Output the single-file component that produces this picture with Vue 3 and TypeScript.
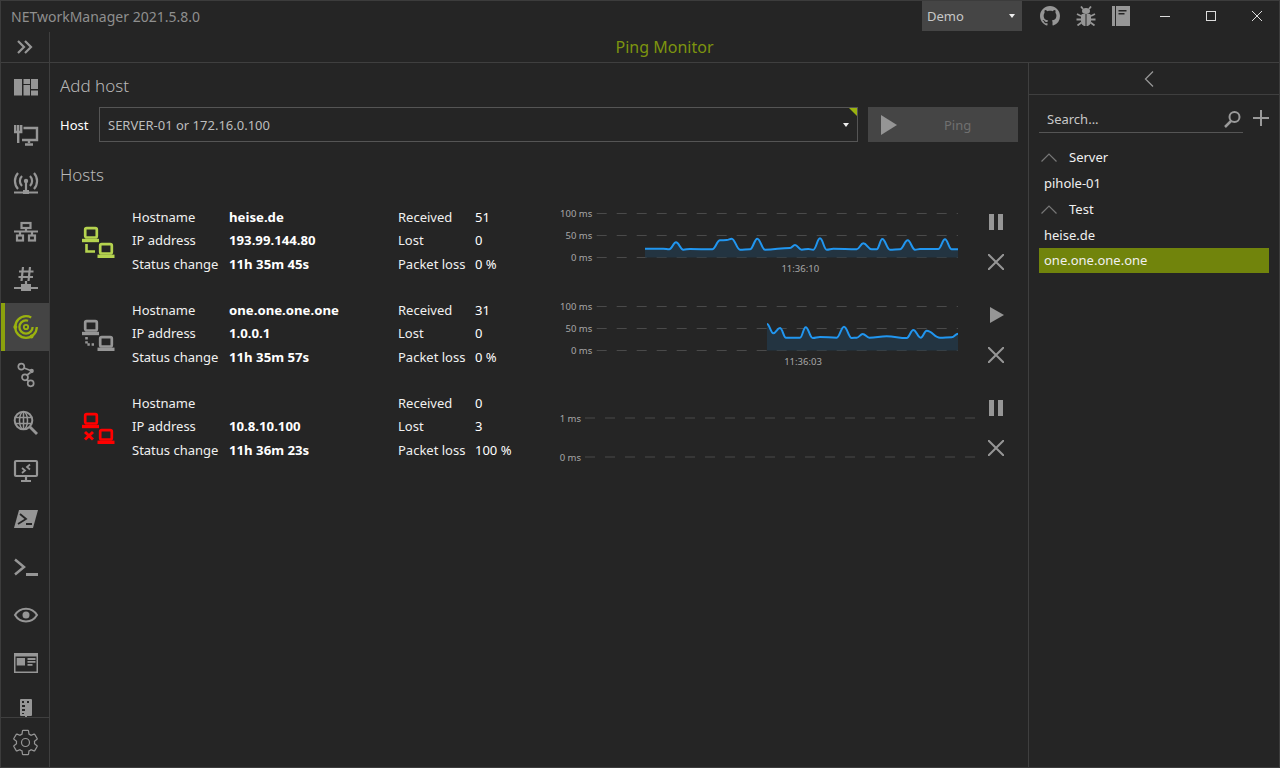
<script setup lang="ts">
interface Chart {
  grid: { label: string; y: number }[]
  startX: number
  endX: number
  labelX: number
  points: number[][]
  time?: string
  timeX?: number
}

interface Host {
  status: 'up' | 'paused' | 'down'
  hostname: string
  ip: string
  change: string
  received: string
  lost: string
  loss: string
  running: boolean
  chart: Chart
}

const grid3 = [
  { label: '100 ms', y: 13.5 },
  { label: '50 ms', y: 35.5 },
  { label: '0 ms', y: 57.5 },
]

// chart coordinates are taken at 3x, so they get divided when drawn
const hosts: Host[] = [
  {
    status: 'up',
    hostname: 'heise.de',
    ip: '193.99.144.80',
    change: '11h 35m 45s',
    received: '51',
    lost: '0',
    loss: '0 %',
    running: true,
    chart: {
      grid: grid3,
      startX: 46.7,
      endX: 408,
      labelX: 42.3,
      time: '11:36:10',
      timeX: 250.3,
      points: [[285,146],[340,146],[358,148],[378,127],[400,149],[420,147],[487,148],[510,121],[530,120],[545,116],[570,149],[600,148],[622,116],[645,149],[720,144],[735,135],[755,149],[775,147],[790,149],[810,115],[830,149],[850,146],[920,148],[940,130],[965,148],[980,148],[997,117],[1020,149],[1050,148],[1073,121],[1095,149],[1110,147],[1165,147],[1185,118],[1205,148],[1224,148]],
    },
  },
  {
    status: 'paused',
    hostname: 'one.one.one.one',
    ip: '1.0.0.1',
    change: '11h 35m 57s',
    received: '31',
    lost: '0',
    loss: '0 %',
    running: false,
    chart: {
      grid: grid3,
      startX: 46.7,
      endX: 408,
      labelX: 42.3,
      time: '11:36:03',
      timeX: 253,
      points: [[651,93],[670,121],[690,105],[708,134],[750,134],[767,103],[788,135],[810,132],[860,134],[882,101],[905,135],[920,134],[938,123],[958,134],[1010,130],[1070,135],[1090,111],[1112,134],[1130,113],[1170,134],[1205,133],[1224,122]],
    },
  },
  {
    status: 'down',
    hostname: '',
    ip: '10.8.10.100',
    change: '11h 36m 23s',
    received: '0',
    lost: '3',
    loss: '100 %',
    running: true,
    chart: {
      grid: [
        { label: '1 ms', y: 32 },
        { label: '0 ms', y: 71 },
      ],
      startX: 35,
      endX: 425,
      labelX: 31,
      points: [],
    },
  },
]

// flat tangents at each point, gives the rounded peaks of the ping graph
function curve(points: number[][]): string {
  let d = ''
  for (let i = 1; i < points.length; i++) {
    const [x0, y0] = points[i - 1]
    const [x1, y1] = points[i]
    const bend = (x1 - x0) * 0.4
    d += `C${((x0 + bend) / 3).toFixed(1)} ${(y0 / 3).toFixed(1)} ${((x1 - bend) / 3).toFixed(1)} ${(y1 / 3).toFixed(1)} ${(x1 / 3).toFixed(1)} ${(y1 / 3).toFixed(1)}`
  }
  return d
}

function linePath(points: number[][]): string {
  return `M${points[0][0] / 3} ${points[0][1] / 3}${curve(points)}`
}

function areaPath(points: number[][]): string {
  const first = points[0][0] / 3
  const last = points[points.length - 1][0] / 3
  return `M${first} 57.5L${first} ${points[0][1] / 3}${curve(points)}L${last} 57.5Z`
}

const groups = [
  { name: 'Server', items: ['pihole-01'] },
  { name: 'Test', items: ['heise.de', 'one.one.one.one'] },
]
</script>

<template>
  <div class="window">
    <header class="titlebar">
      <span class="app-title">NETworkManager 2021.5.8.0</span>
      <div class="profile">
        <span>Demo</span>
        <i class="caret"></i>
      </div>
      <div class="links">
        <svg width="20" height="20" viewBox="0 0 16 16" fill="currentColor">
          <path d="M8 0C3.58 0 0 3.58 0 8c0 3.54 2.29 6.53 5.47 7.59.4.07.55-.17.55-.38 0-.19-.01-.82-.01-1.49-2.01.37-2.53-.49-2.69-.94-.09-.23-.48-.94-.82-1.13-.28-.15-.68-.52-.01-.53.63-.01 1.08.58 1.23.82.72 1.21 1.87.87 2.33.66.07-.52.28-.87.51-1.07-1.78-.2-3.64-.89-3.64-3.95 0-.87.31-1.59.82-2.15-.08-.2-.36-1.02.08-2.12 0 0 .67-.21 2.2.82.64-.18 1.32-.27 2-.27.68 0 1.36.09 2 .27 1.53-1.04 2.2-.82 2.2-.82.44 1.1.16 1.92.08 2.12.51.56.82 1.27.82 2.15 0 3.07-1.87 3.75-3.65 3.95.29.25.54.73.54 1.48 0 1.07-.01 1.93-.01 2.2 0 .21.15.46.55.38A8.013 8.013 0 0016 8c0-4.42-3.58-8-8-8z" />
        </svg>
        <svg width="20" height="20" viewBox="0 0 20 20" fill="currentColor">
          <path d="M7 3L5 .5M13 3l2-2.500M5 10L1 8M5 13.500H.5M5.500 16.500L1.500 19.500M15 10l4-2M15 13.500h4.500M14.500 16.500l4 3" fill="none" stroke="currentColor" stroke-width="1.800" />
          <ellipse cx="10" cy="5" rx="4" ry="3" />
          <path d="M5 9.500C5 8.500 6 8 7 8h2.500v12C7 20 5 18 5 15zM15 9.500C15 8.500 14 8 13 8h-2.500v12c2.500 0 4.500-2 4.500-5z" />
        </svg>
        <svg width="18" height="20" viewBox="0 0 18 20" fill="currentColor">
          <path d="M0 0h3v20H0zM4 0h14v20H4z" />
          <path d="M6.500 4h8v1.500h-8zM6.500 7h6v1.500h-6z" fill="#252525" />
        </svg>
      </div>
      <div class="window-buttons">
        <span>
          <svg width="12" height="12" viewBox="0 0 12 12" stroke="currentColor" fill="none"><path d="M1 6.500h10" /></svg>
        </span>
        <span>
          <svg width="12" height="12" viewBox="0 0 12 12" stroke="currentColor" fill="none"><rect x="1.500" y="1.500" width="9" height="9" /></svg>
        </span>
        <span>
          <svg width="12" height="12" viewBox="0 0 12 12" stroke="currentColor" fill="none"><path d="M1 1l10 10M11 1L1 11" /></svg>
        </span>
      </div>
    </header>

    <div class="body">
      <aside class="sidebar">
        <div class="collapse">
          <svg width="18" height="14" viewBox="0 0 18 14" fill="none" stroke="currentColor" stroke-width="2.200">
            <path d="M2 1l6 6-6 6M9 1l6 6-6 6" />
          </svg>
        </div>
        <nav class="nav">
          <div class="nav-item">
            <svg class="icon" viewBox="0 0 24 24" fill="currentColor">
              <path d="M0 4h8v16.500H0zM9.500 4H16v5H9.500zM9.500 10H16v10.500H9.500zM17 4h7v10h-7zM17 15.500h7v5h-7z" />
            </svg>
          </div>
          <div class="nav-item">
            <svg class="icon" viewBox="0 0 24 24" fill="none" stroke="currentColor" stroke-width="2.400">
              <path d="M1.200 2v7h6V2M4.200 2v18M9.500 5H23v12H8M15 17v3M11 21.500h8" />
            </svg>
          </div>
          <div class="nav-item">
            <svg class="icon" viewBox="0 0 24 24" fill="none" stroke="currentColor" stroke-width="2.200">
              <path d="M8 5a7 7 0 0 0 0 10M16 5a7 7 0 0 1 0 10M4 2a12 12 0 0 0 0 16M20 2a12 12 0 0 1 0 16M12 12v8M0 21.500h24" />
              <circle cx="12" cy="10" r="2.200" fill="currentColor" stroke="none" />
              <rect x="9" y="19" width="6" height="4" fill="currentColor" stroke="none" />
            </svg>
          </div>
          <div class="nav-item">
            <svg class="icon" viewBox="0 0 24 24" fill="none" stroke="currentColor" stroke-width="2.200">
              <path d="M0 12.500h24M12 9v3M6 12v4M18 12v4" />
              <rect x="7.500" y="4" width="9" height="5" />
              <rect x="3" y="16.500" width="6" height="5" />
              <rect x="15" y="16.500" width="6" height="5" />
            </svg>
          </div>
          <div class="nav-item">
            <svg class="icon" viewBox="0 0 24 24" fill="none" stroke="currentColor" stroke-width="2.200">
              <path d="M9 0L7.500 14M16 0l-1.500 14M5 4.500h14.500M4.500 10H19M12 14v4M0 21h24" />
              <rect x="7" y="17" width="10" height="7" fill="currentColor" stroke="none" />
            </svg>
          </div>
          <div class="nav-item active">
            <svg class="icon" viewBox="0 0 24 24" fill="none" stroke="currentColor" stroke-width="2.300">
              <circle cx="12" cy="12" r="10.800" stroke-dasharray="56 12" />
              <circle cx="12" cy="12" r="6.600" stroke-dasharray="33 9" />
              <circle cx="12" cy="12" r="2.200" stroke-width="1.800" />
              <circle cx="1.300" cy="12" r="2" fill="currentColor" stroke="none" />
              <circle cx="17.500" cy="21.500" r="2" fill="currentColor" stroke="none" />
            </svg>
          </div>
          <div class="nav-item">
            <svg class="icon" viewBox="0 0 24 24" fill="none" stroke="currentColor" stroke-width="1.700">
              <path d="M10 5l6.500 2.500M16.500 9.500l-4 3M12.500 16.500l2.500 2" />
              <circle cx="7.300" cy="3.700" r="3" />
              <circle cx="11" cy="14.300" r="3" />
              <circle cx="16.700" cy="20.300" r="3" />
              <circle cx="17.700" cy="8" r="1.300" fill="currentColor" />
            </svg>
          </div>
          <div class="nav-item">
            <svg class="icon" viewBox="0 0 24 24" fill="none" stroke="currentColor" stroke-width="1.500">
              <circle cx="9.500" cy="9.500" r="8.800" stroke-width="2" />
              <ellipse cx="9.500" cy="9.500" rx="4" ry="8.800" />
              <path d="M9.500 1v17M1 6.500h17M1 12.500h17" />
              <path d="M16 16l7 7" stroke-width="2.800" />
            </svg>
          </div>
          <div class="nav-item">
            <svg class="icon" viewBox="0 0 24 24" fill="none" stroke="currentColor" stroke-width="2.200">
              <rect x="1" y="2" width="22" height="15" rx="1" />
              <path d="M12 17v4M7 22h10" />
              <path d="M8 9l3 2.500-3 2.500M16 5.500l-3 2.500 3 2.500" stroke-width="1.800" />
            </svg>
          </div>
          <div class="nav-item">
            <svg class="icon" viewBox="0 0 24 24" fill="currentColor">
              <path d="M5 3h19l-5 18H0z" />
              <path d="M6 7l6 5-8 5M12 17h6" fill="none" stroke="#252525" stroke-width="1.800" />
            </svg>
          </div>
          <div class="nav-item">
            <svg class="icon" viewBox="0 0 24 24" fill="none" stroke="currentColor" stroke-width="2.500">
              <path d="M1 4.500L10 12l-9 7.500" />
              <path d="M12 19.500h12" stroke-width="3" />
            </svg>
          </div>
          <div class="nav-item">
            <svg class="icon" viewBox="0 0 24 24" fill="none" stroke="currentColor" stroke-width="2">
              <path d="M1 12c5-8.500 17-8.500 22 0-5 8.500-17 8.500-22 0z" />
              <circle cx="12" cy="12" r="3.500" fill="currentColor" stroke="none" />
            </svg>
          </div>
          <div class="nav-item">
            <svg class="icon" viewBox="0 0 24 24" fill="currentColor">
              <path d="M0 2h24v20H0zM1.500 5.500V20.500h21V5.500z" fill-rule="evenodd" />
              <rect x="2.700" y="7" width="8.300" height="7.500" />
              <path d="M13.500 7h8v2h-8zM13.500 10h8v1.700h-8zM13.500 13h5v1.700h-5z" />
            </svg>
          </div>
          <div class="nav-item">
            <svg class="icon" viewBox="0 0 24 24" fill="currentColor">
              <rect x="6" y="0" width="12" height="17" rx="1" />
              <rect x="11" y="17" width="2" height="3" />
              <path d="M8 2h2v2H8zM13 2h2v2h-2zM8 6h3v2H8zM8 10h3v2H8zM8 14h2v1H8z" fill="#252525" />
            </svg>
          </div>
        </nav>
        <div class="settings">
          <svg width="29" height="29" viewBox="0 0 24 24" fill="none" stroke="currentColor">
            <path d="M10 22C9.750 22 9.540 21.820 9.500 21.580L9.130 18.930C8.500 18.680 7.960 18.340 7.440 17.940L4.950 18.950C4.730 19.030 4.460 18.950 4.340 18.730L2.340 15.270C2.210 15.050 2.270 14.780 2.460 14.630L4.570 12.970L4.500 12L4.570 11L2.460 9.370C2.270 9.220 2.210 8.950 2.340 8.730L4.340 5.270C4.460 5.050 4.730 4.960 4.950 5.050L7.440 6.050C7.960 5.660 8.500 5.320 9.130 5.070L9.500 2.420C9.540 2.180 9.750 2 10 2H14C14.250 2 14.460 2.180 14.500 2.420L14.870 5.070C15.500 5.320 16.040 5.660 16.560 6.050L19.050 5.050C19.270 4.960 19.540 5.050 19.660 5.270L21.660 8.730C21.790 8.950 21.730 9.220 21.540 9.370L19.430 11L19.500 12L19.430 13L21.540 14.630C21.730 14.780 21.790 15.050 21.660 15.270L19.660 18.730C19.540 18.950 19.270 19.040 19.050 18.950L16.560 17.950C16.040 18.340 15.500 18.680 14.870 18.930L14.500 21.580C14.460 21.820 14.250 22 14 22H10Z" />
            <circle cx="12" cy="12" r="3.300" />
          </svg>
        </div>
      </aside>

      <div class="content">
        <div class="page-title">Ping Monitor</div>
        <div class="panes">
          <main class="main">
            <h2 class="heading">Add host</h2>
            <div class="add-row">
              <label class="host-label">Host</label>
              <div class="host-input">
                <span>SERVER-01 or 172.16.0.100</span>
                <i class="caret"></i>
                <i class="corner"></i>
              </div>
              <div class="ping-button">
                <svg width="16" height="20" viewBox="0 0 16 20" fill="currentColor"><path d="M0 0l16 10L0 20z" /></svg>
                <span>Ping</span>
              </div>
            </div>

            <h2 class="heading hosts-heading">Hosts</h2>
            <div v-for="host in hosts" :key="host.ip" class="host-row">
              <div class="host-icon" :class="host.status">
                <svg width="34" height="34" viewBox="0 0 34 34" fill="none" stroke="currentColor">
                  <rect x="3.200" y="2.200" width="11.600" height="9.300" rx="1.500" stroke-width="2.700" />
                  <path d="M0 14.500h17" stroke-width="3.400" />
                  <rect x="18.200" y="18.200" width="11.600" height="9.300" rx="1.500" stroke-width="2.700" />
                  <path d="M15.500 30.300H32.500" stroke-width="3.400" />
                  <path v-if="host.status === 'up'" d="M4.500 18v7.500h8.500" stroke-width="2.600" />
                  <path v-else-if="host.status === 'paused'" d="M4.500 18v7.500h9" stroke-width="2.600" stroke-dasharray="2.400 1.800" />
                  <path v-else d="M3 20l8 7.500M11 20l-8 7.500" stroke-width="3" />
                </svg>
              </div>
              <dl class="info labels-wide">
                <dt>Hostname</dt><dd>{{ host.hostname }}</dd>
                <dt>IP address</dt><dd>{{ host.ip }}</dd>
                <dt>Status change</dt><dd>{{ host.change }}</dd>
              </dl>
              <dl class="info labels-narrow">
                <dt>Received</dt><dd>{{ host.received }}</dd>
                <dt>Lost</dt><dd>{{ host.lost }}</dd>
                <dt>Packet loss</dt><dd>{{ host.loss }}</dd>
              </dl>
              <svg class="chart" width="430" height="90" viewBox="0 0 430 90">
                <template v-for="line in host.chart.grid" :key="line.label">
                  <text :x="host.chart.labelX" :y="line.y + 3.500" text-anchor="end" class="chart-text">{{ line.label }}</text>
                  <line :x1="host.chart.startX" :x2="host.chart.endX" :y1="line.y" :y2="line.y" stroke="#4a4a4a" stroke-dasharray="10 10" />
                </template>
                <template v-if="host.chart.points.length">
                  <path :d="areaPath(host.chart.points)" fill="#233441" />
                  <path :d="linePath(host.chart.points)" fill="none" stroke="#2196f0" stroke-width="2" />
                  <text :x="host.chart.timeX" y="72" text-anchor="middle" class="chart-text">{{ host.chart.time }}</text>
                </template>
              </svg>
              <div class="controls">
                <svg v-if="host.running" width="16" height="16" viewBox="0 0 16 16" fill="currentColor">
                  <path d="M1 0h5v16H1zM10 0h5v16h-5z" />
                </svg>
                <svg v-else width="16" height="16" viewBox="0 0 16 16" fill="currentColor">
                  <path d="M2 0l14 8-14 8z" />
                </svg>
                <svg width="16" height="16" viewBox="0 0 16 16" fill="none" stroke="currentColor" stroke-width="2">
                  <path d="M0 0l16 16M16 0L0 16" />
                </svg>
              </div>
            </div>
          </main>

          <aside class="profiles">
            <div class="profiles-collapse">
              <svg width="10" height="16" viewBox="0 0 10 16" fill="none" stroke="currentColor" stroke-width="1.300">
                <path d="M9 .5L1.500 8 9 15.500" />
              </svg>
            </div>
            <div class="search-row">
              <div class="search">
                <span>Search...</span>
                <svg width="17" height="17" viewBox="0 0 17 17" fill="none" stroke="#9a9a9a" stroke-width="2">
                  <circle cx="10.500" cy="6" r="5" />
                  <path d="M7 10l-6 6" stroke-width="2.500" />
                </svg>
              </div>
              <svg class="add" width="16" height="16" viewBox="0 0 16 16" fill="none" stroke="#9a9a9a" stroke-width="2">
                <path d="M8 0v16M0 8h16" />
              </svg>
            </div>
            <div class="tree">
              <template v-for="group in groups" :key="group.name">
                <div class="group">
                  <svg width="16" height="9" viewBox="0 0 16 9" fill="none" stroke="#777" stroke-width="1.200">
                    <path d="M.5 8.500L8 1l7.500 7.500" />
                  </svg>
                  <span>{{ group.name }}</span>
                </div>
                <div
                  v-for="item in group.items"
                  :key="item"
                  class="profile-item"
                  :class="{ selected: item === 'one.one.one.one' }"
                >
                  {{ item }}
                </div>
              </template>
            </div>
          </aside>
        </div>
      </div>
    </div>
  </div>
</template>

<style>
html, body {
  margin: 0;
  background: #252525;
}
</style>

<style scoped>
.window {
  box-sizing: border-box;
  width: 1280px;
  height: 768px;
  border: 1px solid #3c3c3c;
  background: #252525;
  color: #f0f0f0;
  font-family: "Noto Sans", "Open Sans", sans-serif;
  font-size: 13px;
  display: flex;
  flex-direction: column;
  overflow: hidden;
}

.titlebar {
  height: 31px;
  flex: none;
  display: flex;
  align-items: flex-start;
}
.app-title {
  margin-left: 10px;
  line-height: 31px;
  font-size: 14px;
  color: #8f8f8f;
  width: 911px;
  flex: none;
}
.profile {
  width: 100px;
  height: 30px;
  flex: none;
  background: #454545;
  color: #c8c8c8;
  display: flex;
  align-items: center;
  justify-content: space-between;
  box-sizing: border-box;
  padding: 0 7px 0 5px;
}
.caret {
  width: 0;
  height: 0;
  border-left: 3.5px solid transparent;
  border-right: 3.5px solid transparent;
  border-top: 4px solid #eee;
}
.links {
  width: 120px;
  height: 30px;
  flex: none;
  display: flex;
  align-items: center;
  color: #969696;
  padding-left: 18px;
  box-sizing: border-box;
  gap: 16px;
}
.window-buttons {
  display: flex;
  flex: 1;
  justify-content: flex-end;
  padding-right: 1px;
  color: #dcdcdc;
}
.window-buttons span {
  width: 46px;
  height: 30px;
  display: flex;
  align-items: center;
  justify-content: center;
}

.body {
  flex: 1;
  display: flex;
  min-height: 0;
}

.sidebar {
  width: 48px;
  flex: none;
  border-right: 1px solid #3f3f3f;
  display: flex;
  flex-direction: column;
  color: #969696;
}
.collapse {
  height: 30px;
  flex: none;
  border-bottom: 1px solid #3f3f3f;
  display: flex;
  align-items: center;
  justify-content: center;
}
.nav {
  flex: 1;
  overflow: hidden;
}
.nav-item {
  height: 48px;
  box-sizing: border-box;
  padding-left: 13px;
  display: flex;
  align-items: center;
}
.nav-item.active {
  background: #444444;
  border-left: 4px solid #8ba10d;
  padding-left: 9px;
  color: #9ab20f;
}
.icon {
  width: 24px;
  height: 24px;
  overflow: visible;
  flex: none;
}
.settings {
  height: 49px;
  flex: none;
  border-top: 1px solid #3f3f3f;
  display: flex;
  align-items: center;
  justify-content: center;
}

.content {
  flex: 1;
  min-width: 0;
  display: flex;
  flex-direction: column;
}
.page-title {
  height: 30px;
  flex: none;
  border-bottom: 1px solid #3f3f3f;
  text-align: center;
  line-height: 30px;
  font-size: 16px;
  color: #7d940f;
}
.panes {
  flex: 1;
  display: flex;
  min-height: 0;
}

.main {
  width: 978px;
  box-sizing: border-box;
  padding: 11px 10px 0;
}
.heading {
  margin: 0;
  font-size: 17px;
  font-weight: 300;
  line-height: 24px;
  color: #b8b8b8;
}
.add-row {
  display: flex;
  align-items: center;
  margin-top: 9px;
  height: 35px;
}
.host-label {
  width: 39px;
  color: #fff;
}
.host-input {
  position: relative;
  width: 759px;
  height: 35px;
  box-sizing: border-box;
  border: 1px solid #555;
  display: flex;
  align-items: center;
  justify-content: space-between;
  padding: 0 8px;
  color: #bdbdbd;
}
.corner {
  position: absolute;
  top: 0;
  right: 0;
  width: 0;
  height: 0;
  border-top: 8px solid #9ab20f;
  border-left: 8px solid transparent;
}
.ping-button {
  margin-left: 10px;
  width: 150px;
  height: 35px;
  background: #454545;
  color: #959595;
  display: flex;
  align-items: center;
  box-sizing: border-box;
  padding-left: 13px;
}
.ping-button span {
  color: #707070;
  margin-left: 47px;
}
.hosts-heading {
  margin-top: 21px;
  margin-bottom: 13px;
}

.host-row {
  display: grid;
  grid-template-columns: 72px 266px 152px 430px 32px;
  height: 93px;
}
.host-icon {
  padding: 26px 0 0 22px;
}
.host-icon.up {
  color: #b5d34f;
}
.host-icon.paused {
  color: #969696;
}
.host-icon.down {
  color: #ff0000;
}
.info {
  margin: 5px 0 0;
  display: grid;
  grid-auto-rows: 23.5px;
  align-items: center;
}
.labels-wide {
  grid-template-columns: 97px 1fr;
}
.labels-narrow {
  grid-template-columns: 77px 1fr;
}
.info dd {
  margin: 0;
  font-weight: 700;
  font-size: 13.2px;
  color: #fff;
}
.labels-narrow dd {
  font-weight: 400;
  font-size: 13px;
}
.chart-text {
  font-size: 9.5px;
  fill: #a8a8a8;
}
.controls {
  display: flex;
  flex-direction: column;
  align-items: center;
  gap: 24px;
  padding-top: 14px;
  color: #969696;
}

.profiles {
  flex: 1;
  min-width: 0;
  border-left: 1px solid #3f3f3f;
}
.profiles-collapse {
  height: 31px;
  border-bottom: 1px solid #3f3f3f;
  display: flex;
  align-items: center;
  justify-content: center;
  color: #969696;
  padding-right: 10px;
}
.search-row {
  display: flex;
  align-items: flex-start;
  padding: 13px 10px 0 10px;
}
.search {
  width: 204px;
  height: 25px;
  box-sizing: border-box;
  border-bottom: 1px solid #555;
  display: flex;
  justify-content: space-between;
  align-items: center;
  padding: 0 2px 2px 8px;
  color: #c8c8c8;
}
.add {
  margin: 2px 0 0 10px;
}
.tree {
  margin-top: 11px;
  padding: 0 10px 0 10px;
}
.group {
  height: 26px;
  display: flex;
  align-items: center;
  padding-left: 2px;
  gap: 12px;
}
.profile-item {
  height: 26px;
  line-height: 26px;
  padding-left: 5px;
}
.profile-item.selected {
  height: 25px;
  line-height: 25px;
  background: #71840c;
}
</style>
